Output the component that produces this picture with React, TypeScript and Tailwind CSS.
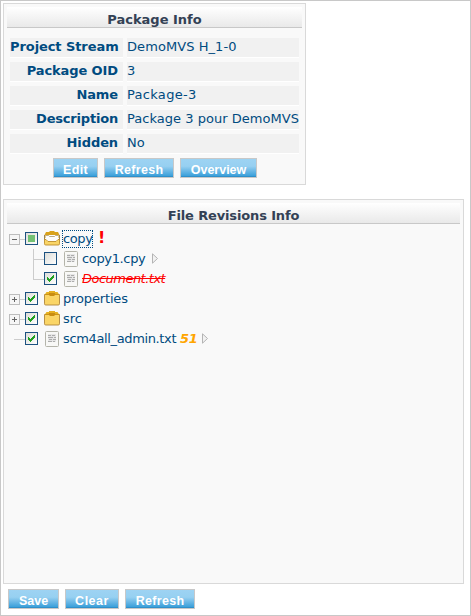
import React from 'react';

const buttonBase =
  "h-5 shrink-0 border border-[#c8c8c8] text-center text-[12.5px] leading-[22px] font-bold text-white [font-family:'Liberation_Sans',Arial,sans-serif] bg-[linear-gradient(#9dd3f3_0%,#97d0f1_40%,#6db9e6_65%,#3fa2db_92%,#2585c0_100%)]";

function Button({ label, className }: { label: string; className: string }) {
  return <button className={`${buttonBase} ${className}`}>{label}</button>;
}

function PanelTitle({ children, className }: { children: string; className: string }) {
  return (
    <h2
      className={`h-[21px] border-b border-[#c8c8c8] bg-linear-to-b from-white to-[#e9e9e9] text-center text-[13px] leading-[25px] font-bold whitespace-nowrap text-[#334155] ${className}`}
    >
      {children}
    </h2>
  );
}

function InfoRow({ label, value, ls, vs }: { label: string; value: string; ls: string; vs: string }) {
  return (
    <div className="flex h-5 gap-1 whitespace-nowrap leading-[18px]">
      <div className={`w-[113px] border-b border-white bg-[#f1f1f1] pr-[5px] text-right font-bold ${ls}`}>{label}</div>
      <div className={`w-[172px] border-b border-white bg-[#f1f1f1] ${vs}`}>{value}</div>
    </div>
  );
}

function Expander({ open }: { open?: boolean }) {
  return (
    <svg className="mt-[5px] h-[11px] w-4 shrink-0" viewBox="0 0 16 11" shapeRendering="crispEdges">
      <rect x=".5" y=".5" width="10" height="10" fill="#f6f6f6" stroke="#bdbdbd" />
      <path d="M3 5.5h5" stroke="#666" />
      {!open && <path d="M5.5 3v5" stroke="#666" />}
      <path d="M11 5.5h5" stroke="#ccc" />
    </svg>
  );
}

function Checkbox({ state }: { state: 'on' | 'off' | 'partial' }) {
  return (
    <svg className="mt-[3px] size-[13px] shrink-0" viewBox="0 0 13 13" shapeRendering="crispEdges">
      <defs>
        <linearGradient id="box" x1="0" y1="0" x2="1" y2="1">
          <stop offset="0" stopColor="#dcdcd7" />
          <stop offset="1" stopColor="#fff" />
        </linearGradient>
      </defs>
      <rect x=".5" y=".5" width="12" height="12" fill="url(#box)" stroke="#1c5180" />
      {state === 'on' && (
        <path
          d="M3 5h1v3h-1zM4 6h1v3h-1zM5 7h1v3h-1zM6 6h1v3h-1zM7 5h1v3h-1zM8 4h1v3h-1zM9 3h1v3h-1z"
          fill="#21a121"
        />
      )}
      {state === 'partial' && <rect x="3" y="3" width="7" height="7" fill="#73c173" />}
    </svg>
  );
}

function Folder({ open }: { open?: boolean }) {
  return (
    <svg className="mt-[2px] h-[15px] w-4 shrink-0" viewBox="0 0 16 15">
      {open ? (
        <>
          <path d="M2 1h3.500V0h5v1H14l1.500 3v3H.5V4z" fill="#d9a21b" />
          <path d="M.5 4v5M15.500 4v5" stroke="#9c8453" />
          <path d="M1.500 4h13v4L12 10.500H4L1.500 8z" fill="#fdfdfd" />
          <path d="M1.500 4.500h3l1 1h5l1-1h3" fill="none" stroke="#a8956a" strokeWidth=".8" />
          <path d="M.5 8.500h1.500l2 2h8l2-2h1.500v4.300q0 1.200-1.200 1.200H1.700Q.5 14 .5 12.800z" fill="#fad566" stroke="#bd8d2a" strokeWidth=".9" />
        </>
      ) : (
        <>
          <path d="M.5 3.500h15v9.300q0 1.200-1.200 1.200H1.700Q.5 14 .5 12.800z" fill="#fad566" stroke="#b0863a" strokeWidth=".9" />
          <path d="M2.500 1H5V0h6v1h2.500L15.500 4H.5z" fill="#e5b021" />
          <path d="M1 3.500h14" stroke="#c28b18" strokeWidth=".8" />
          <path d="M5 2h6v2l-1 1H6L5 4z" fill="#c98c10" />
        </>
      )}
    </svg>
  );
}

function FileIcon() {
  return (
    <svg className="mt-[2px] h-4 w-[14px] shrink-0" viewBox="0 0 14 16">
      <rect x=".5" y=".5" width="13" height="15" rx="1" fill="#f8f8f6" stroke="#b4b4aa" />
      <path d="M3 3h8v8H3z" fill="#e6e6e6" />
      <path d="M3 4.500h3M7 4.500h3M3 6.500h5M9 6.500h2M4 8.500h3M8 8.500h3M3 10.500h4M8 10.500h2" stroke="#acacac" />
    </svg>
  );
}

function Arrow({ className }: { className: string }) {
  return (
    <svg className={`mt-[4px] h-[11px] w-[6px] shrink-0 ${className}`} viewBox="0 0 6 11">
      <path d="M.5 .8v9.400L5.500 5.500z" fill="#f2f2f2" stroke="#b4b4b4" />
    </svg>
  );
}

function Branch({ last }: { last?: boolean }) {
  return (
    <svg className="ml-6 h-5 w-[11px] shrink-0" viewBox="0 0 11 20" shapeRendering="crispEdges">
      <path d={last ? 'M.5 0v10.500H11' : 'M.5 0v20M0 10.500h11'} fill="none" stroke="#ccc" />
    </svg>
  );
}

const row = 'flex h-5 items-start whitespace-nowrap leading-5';

export default function App() {
  return (
    <main className="h-[616px] w-[471px] overflow-hidden border border-[#c8c8c8] bg-white pt-[2px] pl-[2px] text-[13px] text-[#004b80] [font-family:'DejaVu_Sans',Verdana,sans-serif]">
      <section className="h-[182px] w-[303px] border border-[#d9d9d9] bg-[#f9f9f9] pt-[3px] pl-[3px]">
        <PanelTitle className="w-[295px]">Package Info</PanelTitle>
        <div className="mt-[10px] ml-[3px] flex flex-col gap-1">
          <InfoRow label="Project Stream" value="DemoMVS H_1-0" ls="tracking-[-0.08px]" vs="tracking-[0.07px]" />
          <InfoRow label="Package OID" value="3" ls="tracking-[-0.1px]" vs="" />
          <InfoRow label="Name" value="Package-3" ls="tracking-[-0.1px]" vs="tracking-[0.3px]" />
          <InfoRow label="Description" value="Package 3 pour DemoMVS" ls="tracking-[-0.2px]" vs="tracking-[0.03px]" />
          <InfoRow label="Hidden" value="No" ls="tracking-[-0.1px]" vs="" />
        </div>
        <div className="mt-[4px] ml-[46px] flex gap-[6px]">
          <Button label="Edit" className="w-[45px] tracking-[0.4px]" />
          <Button label="Refresh" className="w-[70px] tracking-[0.3px]" />
          <Button label="Overview" className="w-[77px]" />
        </div>
      </section>

      <section className="mt-[14px] h-[385px] w-[461px] border border-[#d9d9d9] bg-[#f9f9f9] pt-[3px] pl-[3px]">
        <PanelTitle className="w-[453px] tracking-[-0.14px]">File Revisions Info</PanelTitle>
        <div className="mt-[5px] ml-[2px]">
          <div className={row}>
            <Expander open />
            <Checkbox state="partial" />
            <span className="w-[6px]" />
            <Folder open />
            <span className="ml-[2px] mt-[1px] h-[18px] w-[31px] border border-dotted border-[#004b80] leading-[15px] tracking-[-0.4px]">copy</span>
            <span className="ml-[5px] text-[16px] leading-[18px] font-bold text-[#f00]">!</span>
          </div>
          <div className={row}>
            <Branch />
            <Checkbox state="off" />
            <span className="w-[7px]" />
            <FileIcon />
            <span className="ml-1 w-[66px] tracking-[-0.35px]">copy1.cpy</span>
            <Arrow className="ml-1" />
          </div>
          <div className={row}>
            <Branch last />
            <Checkbox state="on" />
            <span className="w-[7px]" />
            <FileIcon />
            <span className="ml-1 tracking-[-0.52px] text-[#f00] italic line-through">Document.txt</span>
          </div>
          <div className={row}>
            <Expander />
            <Checkbox state="on" />
            <span className="w-[6px]" />
            <Folder />
            <span className="ml-[3px] tracking-[-0.15px]">properties</span>
          </div>
          <div className={row}>
            <Expander />
            <Checkbox state="on" />
            <span className="w-[6px]" />
            <Folder />
            <span className="ml-[3px]">src</span>
          </div>
          <div className={row}>
            <span className="mt-[10px] ml-[5px] h-px w-[11px] bg-[#ccc]" />
            <Checkbox state="on" />
            <span className="w-[7px]" />
            <FileIcon />
            <span className="ml-1 w-[113px] tracking-[-0.36px]">scm4all_admin.txt</span>
            <span className="ml-1 w-[18px] tracking-[-0.3px] font-bold text-[#ffa500] italic">51</span>
            <Arrow className="ml-1" />
          </div>
        </div>
      </section>

      <footer className="mt-[5px] ml-[5px] flex gap-[6px]">
        <Button label="Save" className="w-[51px]" />
        <Button label="Clear" className="w-[54px] tracking-[0.5px]" />
        <Button label="Refresh" className="w-[70px] tracking-[0.3px]" />
      </footer>
    </main>
  );
}
